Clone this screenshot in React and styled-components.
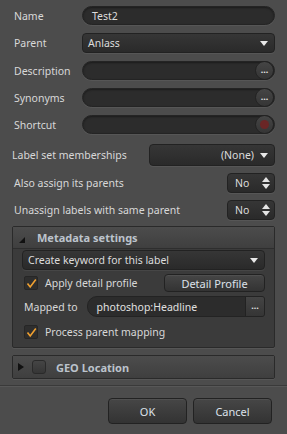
import styled, { createGlobalStyle } from "styled-components";

const Global = createGlobalStyle`
  html, body {
    margin: 0;
    background: #4c4c4c;
  }
  * {
    box-sizing: border-box;
  }
`;

const Dialog = styled.div`
  width: 287px;
  height: 434px;
  background: #4c4c4c;
  color: #d8d8d8;
  font-family: "Noto Sans", "Liberation Sans", sans-serif;
  font-size: 10.5px;
  padding: 6px 12px 0 12px;
  display: flex;
  flex-direction: column;
`;

const FieldGrid = styled.div`
  display: grid;
  grid-template-columns: 68px 1fr;
  row-gap: 8px;
  align-items: center;
  padding-left: 2px;
`;

const Label = styled.span`
  white-space: nowrap;
`;

const Pill = styled.div`
  height: 19px;
  border-radius: 10px;
  background: #2c2c2c;
  border: 1px solid #242424;
  box-shadow: inset 0 1px 2px rgba(0, 0, 0, 0.4), 0 1px 0 rgba(255, 255, 255, 0.06);
  display: flex;
  align-items: center;
  padding-left: 9px;
  color: #dcdcdc;
  position: relative;
`;

const Select = styled.div`
  height: ${p => p.$h || 20}px;
  border-radius: 4px;
  background: linear-gradient(#363636, #2a2a2a);
  border: 1px solid #222;
  box-shadow: 0 1px 0 rgba(255, 255, 255, 0.06);
  display: flex;
  align-items: center;
  justify-content: ${p => (p.$right ? "flex-end" : "space-between")};
  gap: 6px;
  padding: 0 6px 0 ${p => p.$pl || 5}px;
  color: #dcdcdc;
  width: ${p => (p.$w ? p.$w + "px" : "auto")};
`;

const Arrow = styled.span`
  width: 0;
  height: 0;
  border-left: 4px solid transparent;
  border-right: 4px solid transparent;
  border-top: 5px solid #e8e8e8;
  margin-top: 1px;
`;

const RoundBtn = styled.div`
  position: absolute;
  right: 0;
  top: -1px;
  width: 19px;
  height: 19px;
  border-radius: 50%;
  background: linear-gradient(#454545, #353535);
  border: 1px solid #232323;
  display: flex;
  align-items: center;
  justify-content: center;
  color: #e6e6e6;
  font-size: 9px;
  font-weight: bold;
  line-height: 1;
  padding-bottom: 3px;
`;

const RecDot = styled.span`
  width: 9px;
  height: 9px;
  border-radius: 50%;
  background: #6a2626;
  margin-top: 3px;
`;

const OptionRow = styled.div`
  display: flex;
  align-items: center;
  justify-content: space-between;
  padding-left: ${p => p.$pl || 0}px;
`;

const Options = styled.div`
  display: flex;
  flex-direction: column;
  gap: 7px;
  margin-top: 10px;
`;

const Spinner = styled(Select)`
  width: 48px;
  padding: 0 4px 0 7px;
`;

const UpDown = styled.span`
  display: flex;
  flex-direction: column;
  gap: 2px;
  &::before,
  &::after {
    content: "";
    width: 0;
    height: 0;
    border-left: 4px solid transparent;
    border-right: 4px solid transparent;
  }
  &::before {
    border-bottom: 5px solid #e4e4e4;
  }
  &::after {
    border-top: 5px solid #e4e4e4;
  }
`;

const Panel = styled.div`
  margin-top: ${p => p.$mt}px;
  border: 1px solid #2a2a2a;
  border-radius: 2px;
  background: #3b3b3b;
  box-shadow: 0 1px 0 rgba(255, 255, 255, 0.06);
`;

const PanelHead = styled.div`
  height: 22px;
  display: flex;
  align-items: center;
  gap: 8px;
  padding-left: 5px;
  background: linear-gradient(#4c4c4c, #3f3f3f);
  border-bottom: ${p => (p.$open ? "1px solid #2e2e2e" : "none")};
  font-weight: bold;
  font-size: 11px;
  color: #bcc3cc;
`;

const OpenTri = styled.span`
  width: 0;
  height: 0;
  border-left: 6px solid transparent;
  border-bottom: 6px solid #111;
  margin: 4px 4px 0 1px;
`;

const ClosedTri = styled.span`
  width: 0;
  height: 0;
  border-top: 4px solid transparent;
  border-bottom: 4px solid transparent;
  border-left: 6px solid #111;
`;

const HeadBox = styled.span`
  width: 14px;
  height: 14px;
  border-radius: 3px;
  background: linear-gradient(#454545, #363636);
  border: 1px solid #2a2a2a;
  margin-right: 2px;
`;

const PanelBody = styled.div`
  padding: 1px 9px 8px 9px;
  display: flex;
  flex-direction: column;
  gap: 4px;
`;

const CheckRow = styled.div`
  display: flex;
  align-items: center;
  gap: 7px;
  padding-left: 2px;
  flex: 1;
  margin-top: ${p => p.$mt || 0}px;
`;

const Box = styled.span`
  width: 14px;
  height: 14px;
  border-radius: 2px;
  background: #2e2e2e;
  border: 1px solid #262626;
  display: flex;
  align-items: center;
  justify-content: center;
`;

const Check = () => (
  <Box>
    <svg width="11" height="11" viewBox="0 0 11 11">
      <path d="M1.5 5.5 L4.2 9 L9.8 1.5" fill="none" stroke="#f0a030" strokeWidth="1.6" />
    </svg>
  </Box>
);

const Button = styled.div`
  height: ${p => p.$h || 26}px;
  width: ${p => p.$w}px;
  border-radius: 4px;
  background: linear-gradient(#464646, #333);
  border: 1px solid #222;
  box-shadow: inset 0 1px 0 rgba(255, 255, 255, 0.06);
  display: flex;
  align-items: center;
  justify-content: center;
  color: #dce2ea;
  font-size: 11px;
`;

const MapRow = styled.div`
  display: flex;
  align-items: center;
  padding-left: 2px;
  gap: 9px;
`;

const MapInput = styled.div`
  flex: 1;
  height: 21px;
  border-radius: 10px 3px 3px 10px;
  background: #2c2c2c;
  border: 1px solid #232323;
  display: flex;
  align-items: center;
  justify-content: space-between;
  padding-left: 9px;
  color: #e0e0e0;
  overflow: hidden;
`;

const DotsSquare = styled.span`
  width: 19px;
  height: 100%;
  border-left: 1px solid #222;
  background: linear-gradient(#444, #353535);
  display: flex;
  align-items: center;
  justify-content: center;
  font-weight: bold;
  font-size: 9px;
  padding-bottom: 3px;
`;

const Separator = styled.div`
  margin: 6px -12px 0;
  border-top: 1px solid #3a3a3a;
  border-bottom: 1px solid #575757;
`;

const Footer = styled.div`
  display: flex;
  justify-content: flex-end;
  gap: 6px;
  margin-top: 11px;
  padding-right: 3px;
`;

export default function App() {
  return (
    <Dialog>
      <Global />
      <FieldGrid>
        <Label>Name</Label>
        <Pill>Test2</Pill>
        <Label>Parent</Label>
        <Select $h={20}>
          <span>Anlass</span>
          <Arrow />
        </Select>
        <Label>Description</Label>
        <Pill>
          <RoundBtn>...</RoundBtn>
        </Pill>
        <Label>Synonyms</Label>
        <Pill>
          <RoundBtn>...</RoundBtn>
        </Pill>
        <Label>Shortcut</Label>
        <Pill>
          <RoundBtn>
            <RecDot />
          </RoundBtn>
        </Pill>
      </FieldGrid>

      <Options>
        <OptionRow>
          <Label>Label set memberships</Label>
          <Select $h={22} $w={126} $right>
            <span>(None)</span>
            <Arrow />
          </Select>
        </OptionRow>
        <OptionRow $pl={2}>
          <Label>Also assign its parents</Label>
          <Spinner $h={20}>
            <span>No</span>
            <UpDown />
          </Spinner>
        </OptionRow>
        <OptionRow $pl={2}>
          <Label>Unassign labels with same parent</Label>
          <Spinner $h={20}>
            <span>No</span>
            <UpDown />
          </Spinner>
        </OptionRow>
      </Options>

      <Panel $mt={6}>
        <PanelHead $open>
          <OpenTri />
          <span>Metadata settings</span>
        </PanelHead>
        <PanelBody>
          <Select $h={20} $pl={5}>
            <span>Create keyword for this label</span>
            <Arrow />
          </Select>
          <OptionRow>
            <CheckRow>
              <Check />
              <span>Apply detail profile</span>
            </CheckRow>
            <Button $w={101} $h={18}>
              Detail Profile
            </Button>
          </OptionRow>
          <MapRow>
            <Label>Mapped to</Label>
            <MapInput>
              <span>photoshop:Headline</span>
              <DotsSquare>...</DotsSquare>
            </MapInput>
          </MapRow>
          <CheckRow $mt={4}>
            <Check />
            <span>Process parent mapping</span>
          </CheckRow>
        </PanelBody>
      </Panel>

      <Panel $mt={7}>
        <PanelHead>
          <ClosedTri />
          <HeadBox />
          <span>GEO Location</span>
        </PanelHead>
      </Panel>

      <Separator />

      <Footer>
        <Button $w={79}>OK</Button>
        <Button $w={79}>Cancel</Button>
      </Footer>
    </Dialog>
  );
}
